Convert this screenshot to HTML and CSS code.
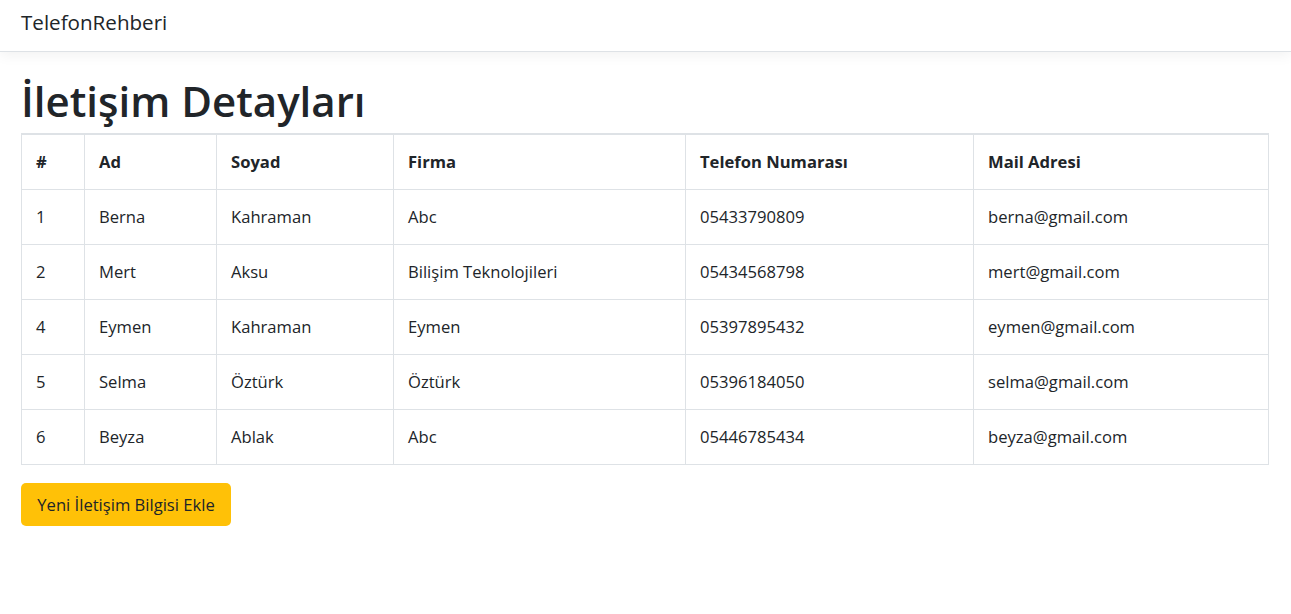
FILE: index.html
```html
<!DOCTYPE html>
<html lang="tr">
<head>
<meta charset="utf-8">
<title>TelefonRehberi</title>
<link rel="stylesheet" href="styles.css">
</head>
<body>
<header class="navbar">
  <a class="brand" href="#">TelefonRehberi</a>
</header>
<main class="main">
  <h1 class="title">İletişim Detayları</h1>
  <table class="table">
    <colgroup>
      <col class="c1"><col class="c2"><col class="c3"><col class="c4"><col class="c5"><col class="c6">
    </colgroup>
    <thead>
      <tr><th>#</th><th>Ad</th><th>Soyad</th><th>Firma</th><th>Telefon Numarası</th><th>Mail Adresi</th></tr>
    </thead>
    <tbody>
      <tr><td>1</td><td>Berna</td><td>Kahraman</td><td>Abc</td><td>05433790809</td><td>berna@gmail.com</td></tr>
      <tr><td>2</td><td>Mert</td><td>Aksu</td><td>Bilişim Teknolojileri</td><td>05434568798</td><td>mert@gmail.com</td></tr>
      <tr><td>4</td><td>Eymen</td><td>Kahraman</td><td>Eymen</td><td>05397895432</td><td>eymen@gmail.com</td></tr>
      <tr><td>5</td><td>Selma</td><td>Öztürk</td><td>Öztürk</td><td>05396184050</td><td>selma@gmail.com</td></tr>
      <tr><td>6</td><td>Beyza</td><td>Ablak</td><td>Abc</td><td>05446785434</td><td>beyza@gmail.com</td></tr>
    </tbody>
  </table>
  <a class="btn" href="#">Yeni İletişim Bilgisi Ekle</a>
</main>
</body>
</html>
```
FILE: styles.css
```css
* { box-sizing: border-box; }
html, body { margin: 0; padding: 0; }
body {
  font-family: "Open Sans", "Noto Sans", sans-serif;
  font-size: 16.6px;
  line-height: 24px;
  color: #212529;
  background: #fff;
}
.navbar {
  height: 52px;
  padding: 0 21px;
  display: flex;
  align-items: center;
  border-bottom: 1px solid #dee2e6;
  box-shadow: 0 4px 12px rgba(0,0,0,.05);
  background: #fff;
}
.brand {
  font-size: 20.6px;
  color: #212529;
  text-decoration: none;
  line-height: 30px;
  margin-top: -8px;
}
.main {
  padding: 25px 21px 0;
}
.title {
  margin: 0 0 8px;
  font-size: 42px;
  font-weight: 600;
  line-height: 48px;
}
.table {
  width: 1247px;
  border-collapse: collapse;
  table-layout: fixed;
  margin-bottom: 18px;
  border: 1px solid #dee2e6;
  border-top: 2px solid #dee2e6;
}
.c1 { width: 63px; }
.c2 { width: 132px; }
.c3 { width: 177px; }
.c4 { width: 292px; }
.c5 { width: 288px; }
.c6 { width: 295px; }
.table th, .table td {
  border: 1px solid #dee2e6;
  padding: 15px 14px;
  text-align: left;
  vertical-align: top;
  height: 55px;
}
.table th { font-weight: 700; }
.btn {
  display: inline-block;
  background: #ffc107;
  color: #212529;
  text-decoration: none;
  padding: 10px 14px;
  line-height: 23px;
  border-radius: 5px;
  width: 210px;
  text-align: center;
}
```
